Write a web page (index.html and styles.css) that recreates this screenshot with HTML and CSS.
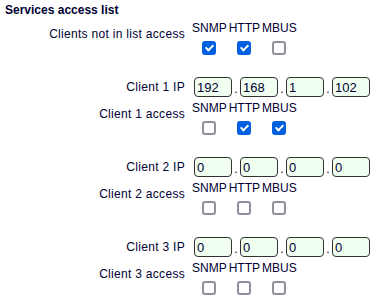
FILE: index.html
```html
<!DOCTYPE html>
<html>
<head>
	<meta charset="utf-8">
	<title>Services access list</title>
	<link rel="stylesheet" href="styles.css">
</head>
<body>
	<div class="panel">
		<div class="title">Services access list</div>

		<div class="row row-access">
			<div class="label">Clients not in list access</div>
			<div class="services">
				<label class="svc"><span class="svc-name">SNMP</span><input class="check" type="checkbox" checked></label>
				<label class="svc"><span class="svc-name">HTTP</span><input class="check" type="checkbox" checked></label>
				<label class="svc"><span class="svc-name">MBUS</span><input class="check" type="checkbox"></label>
			</div>
		</div>
		<div class="spacer"></div>

		<div class="row row-ip">
			<div class="label">Client 1 IP</div>
			<div class="ip">
				<input class="octet" type="text" value="192"><span class="dot">.</span><input class="octet" type="text" value="168"><span class="dot">.</span><input class="octet" type="text" value="1"><span class="dot">.</span><input class="octet" type="text" value="102">
			</div>
		</div>
		<div class="row row-access">
			<div class="label">Client 1 access</div>
			<div class="services">
				<label class="svc"><span class="svc-name">SNMP</span><input class="check" type="checkbox"></label>
				<label class="svc"><span class="svc-name">HTTP</span><input class="check" type="checkbox" checked></label>
				<label class="svc"><span class="svc-name">MBUS</span><input class="check" type="checkbox" checked></label>
			</div>
		</div>
		<div class="spacer"></div>

		<div class="row row-ip">
			<div class="label">Client 2 IP</div>
			<div class="ip">
				<input class="octet" type="text" value="0"><span class="dot">.</span><input class="octet" type="text" value="0"><span class="dot">.</span><input class="octet" type="text" value="0"><span class="dot">.</span><input class="octet" type="text" value="0">
			</div>
		</div>
		<div class="row row-access">
			<div class="label">Client 2 access</div>
			<div class="services">
				<label class="svc"><span class="svc-name">SNMP</span><input class="check" type="checkbox"></label>
				<label class="svc"><span class="svc-name">HTTP</span><input class="check" type="checkbox"></label>
				<label class="svc"><span class="svc-name">MBUS</span><input class="check" type="checkbox"></label>
			</div>
		</div>
		<div class="spacer"></div>

		<div class="row row-ip">
			<div class="label">Client 3 IP</div>
			<div class="ip">
				<input class="octet" type="text" value="0"><span class="dot">.</span><input class="octet" type="text" value="0"><span class="dot">.</span><input class="octet" type="text" value="0"><span class="dot">.</span><input class="octet" type="text" value="0">
			</div>
		</div>
		<div class="row row-access">
			<div class="label">Client 3 access</div>
			<div class="services">
				<label class="svc"><span class="svc-name">SNMP</span><input class="check" type="checkbox"></label>
				<label class="svc"><span class="svc-name">HTTP</span><input class="check" type="checkbox"></label>
				<label class="svc"><span class="svc-name">MBUS</span><input class="check" type="checkbox"></label>
			</div>
		</div>
	</div>
</body>
</html>
```

FILE: styles.css
```css
body {
	margin: 0;
	background: #fff;
	color: #000033;
	font-family: "Liberation Sans", Arial, sans-serif;
	font-size: 12px;
}
.title {
	margin: 3px 0 0 5px;
	font-weight: bold;
	line-height: 14px;
	height: 14px;
}
.row {display: grid; grid-template-columns: 185px auto; column-gap: 6px;}
.label {text-align: right; line-height: 14px; white-space: nowrap; letter-spacing: 0.3px;}
.row-access {margin-top: 4px;}
.row-access .label {margin-top: 6px;}
.row-ip {align-items: center;}
.spacer {height: 20px;}

.services {display: flex;}
.svc {display: flex; flex-direction: column; align-items: center; padding: 0 1px;}
.svc-name {line-height: 14px; white-space: nowrap;}
.check {
	-webkit-appearance: none;
	appearance: none;
	position: relative;
	display: block;
	box-sizing: border-box;
	width: 14px;
	height: 14px;
	margin: 6px 0 2px;
	border: 2px solid #8f8f9d;
	border-radius: 3px;
	background: #fff;
}
.check:checked {background: #0060df; border-color: #0060df;}
.check:checked::after {
	content: "";
	position: absolute;
	left: 3px;
	top: 0;
	width: 3px;
	height: 6px;
	border: solid #fff;
	border-width: 0 2px 2px 0;
	transform: rotate(45deg);
}

.ip {display: flex; align-items: flex-end; margin-left: 3px;}
.octet {
	box-sizing: border-box;
	width: 38px;
	height: 20px;
	margin: 0;
	padding: 0 2px;
	border: 1px solid #333;
	border-radius: 4px;
	background: #f0fff0;
	color: #000033;
	font-family: "Liberation Sans", Arial, sans-serif;
	font-size: 13px;
	outline: none;
}
.dot {width: 8px; text-align: center; line-height: 16px;}
```
